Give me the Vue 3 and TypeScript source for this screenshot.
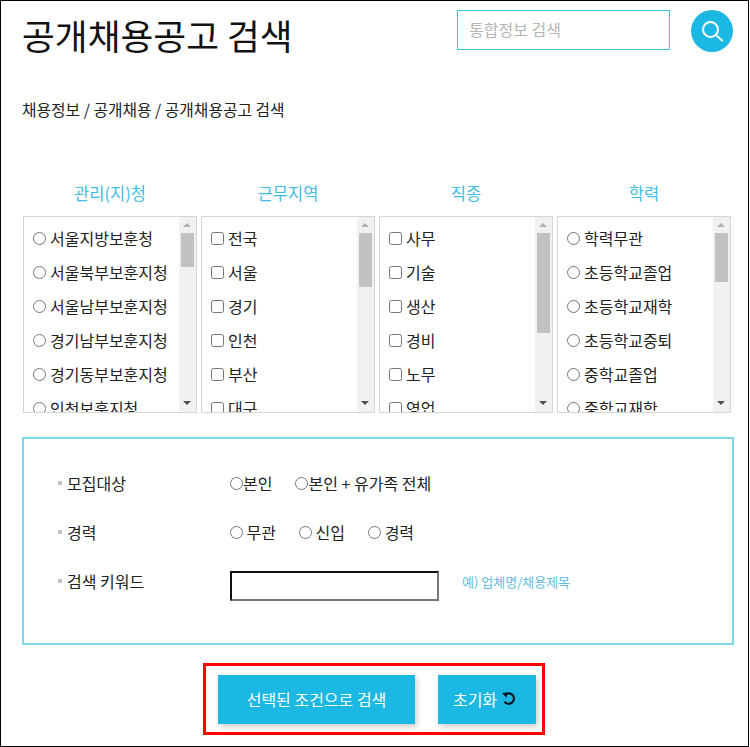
<script setup lang="ts">
interface Filter {
  title: string;
  type: "radio" | "checkbox";
  thumb: number;
  items: string[];
}

const filters: Filter[] = [
  {
    title: "관리(지)청",
    type: "radio",
    thumb: 34,
    items: ["서울지방보훈청", "서울북부보훈지청", "서울남부보훈지청", "경기남부보훈지청", "경기동부보훈지청", "인천보훈지청"],
  },
  {
    title: "근무지역",
    type: "checkbox",
    thumb: 54,
    items: ["전국", "서울", "경기", "인천", "부산", "대구"],
  },
  {
    title: "직종",
    type: "checkbox",
    thumb: 100,
    items: ["사무", "기술", "생산", "경비", "노무", "영업"],
  },
  {
    title: "학력",
    type: "radio",
    thumb: 49,
    items: ["학력무관", "초등학교졸업", "초등학교재학", "초등학교중퇴", "중학교졸업", "중학교재학"],
  },
];
</script>

<template>
  <div class="page">
    <header class="top">
      <h1>공개채용공고 검색</h1>
      <div class="search">
        <input class="search-input" type="text" placeholder="통합정보 검색" />
        <button class="search-btn" type="button" aria-label="검색">
          <svg width="24" height="24" viewBox="0 0 24 24" fill="none" stroke="#fff" stroke-width="2">
            <circle cx="10.5" cy="10.5" r="7.5" />
            <path d="M16 16l6 5.5" stroke-linecap="round" />
          </svg>
        </button>
      </div>
    </header>

    <p class="crumb">채용정보 / 공개채용 / 공개채용공고 검색</p>

    <section class="filters">
      <div v-for="f in filters" :key="f.title" class="filter">
        <h2>{{ f.title }}</h2>
        <div class="box">
          <ul>
            <li v-for="item in f.items" :key="item">
              <input :type="f.type" :name="f.title" />
              <span>{{ item }}</span>
            </li>
          </ul>
          <div class="bar">
            <i class="arrow up"></i>
            <i class="thumb" :style="{ height: f.thumb + 'px' }"></i>
            <i class="arrow down"></i>
          </div>
        </div>
      </div>
    </section>

    <section class="panel">
      <div class="row">
        <span class="label">모집대상</span>
        <div class="opts">
          <label><input type="radio" name="target" />본인</label>
          <label><input type="radio" name="target" />본인 + 유가족 전체</label>
        </div>
      </div>
      <div class="row">
        <span class="label">경력</span>
        <div class="opts">
          <label><input type="radio" name="career" /> 무관</label>
          <label><input type="radio" name="career" /> 신입</label>
          <label><input type="radio" name="career" /> 경력</label>
        </div>
      </div>
      <div class="row">
        <span class="label">검색 키워드</span>
        <input class="keyword" type="text" />
        <span class="hint">예) 업체명/채용제목</span>
      </div>
    </section>

    <div class="actions">
      <button class="btn wide" type="button">선택된 조건으로 검색</button>
      <button class="btn reset" type="button">
        초기화
        <svg width="14" height="14" viewBox="0 0 14 14" fill="none" stroke="#0a1626" stroke-width="2.2">
          <path d="M3 3A5.2 5.2 0 1 1 2.5 9.6" />
          <path d="M0 1L5.5 0.6L4.6 5.8z" fill="#0a1626" stroke="none" />
        </svg>
      </button>
    </div>
  </div>
</template>

<style>
html,
body {
  margin: 0;
  background: #fff;
}
</style>

<style scoped>
.page {
  box-sizing: border-box;
  width: 749px;
  height: 747px;
  border: 1px solid #000;
  overflow: hidden;
  font-family: "Noto Sans CJK KR", "Noto Sans", sans-serif;
  color: #222;
}
.top {
  display: flex;
  justify-content: space-between;
  padding: 9px 15px 0 21px;
}
h1 {
  margin: 0;
  font-size: 35.7px;
  font-weight: 400;
  line-height: 50px;
  color: #111;
}
.search {
  display: flex;
  gap: 21px;
}
.search-input {
  box-sizing: border-box;
  width: 213px;
  height: 40px;
  padding: 0 11px 2px;
  border: 1px solid #3fc3ea;
  outline: 0;
  font: 16px "Noto Sans CJK KR", sans-serif;
}
.search-input::placeholder {
  color: #b5b5b5;
}
.search-btn {
  display: flex;
  align-items: center;
  justify-content: center;
  width: 42px;
  height: 42px;
  padding: 0;
  border: 0;
  border-radius: 50%;
  background: #1ab8e2;
}
.crumb {
  margin: 40px 0 0 21px;
  font-size: 15.8px;
  line-height: 20px;
  color: #222;
}
.filters {
  display: grid;
  grid-template-columns: repeat(4, 174px);
  gap: 4px;
  margin: 62px 0 0 22px;
}
h2 {
  margin: 0 0 12px;
  font-size: 16.5px;
  font-weight: 400;
  line-height: 22px;
  text-align: center;
  color: #3fbde2;
}
.box {
  box-sizing: border-box;
  display: flex;
  height: 197px;
  border: 1px solid #d6d6d6;
  overflow: hidden;
}
ul {
  flex: 1;
  margin: 0;
  padding: 4px 0 0 9px;
  list-style: none;
}
li {
  display: flex;
  align-items: center;
  gap: 4px;
  height: 34px;
  font-size: 16px;
  white-space: nowrap;
}
li input,
.opts input {
  margin: 0;
}
.bar {
  position: relative;
  flex: none;
  width: 17px;
  height: 100%;
  background: #f1f1f1;
}
.thumb {
  position: absolute;
  top: 16px;
  left: 2px;
  width: 13px;
  background: #c1c1c1;
}
.arrow {
  position: absolute;
  left: 4px;
  width: 0;
  height: 0;
  border-left: 4px solid transparent;
  border-right: 4px solid transparent;
}
.arrow.up {
  top: 6px;
  border-bottom: 4px solid #b0b0b0;
}
.arrow.down {
  bottom: 7px;
  border-top: 4px solid #505050;
}
.panel {
  box-sizing: border-box;
  display: flex;
  flex-direction: column;
  gap: 27px;
  width: 712px;
  height: 208px;
  margin: 24px 0 0 21px;
  padding: 33px 0 0 34px;
  border: 2px solid #7cd9ea;
  font-size: 16px;
}
.row {
  display: flex;
  align-items: center;
  height: 22px;
}
.label {
  display: flex;
  align-items: center;
  gap: 5px;
  width: 172px;
}
.label::before {
  content: "";
  width: 4px;
  height: 4px;
  background: #c4c4c4;
}
.opts {
  display: flex;
  gap: 23px;
}
.opts label {
  display: flex;
  align-items: center;
  white-space: pre;
}
.keyword {
  box-sizing: border-box;
  flex: none;
  width: 209px;
  height: 30px;
  margin-top: 9px;
  border: 2px solid;
  border-color: #111 #767676 #767676 #111;
  outline: 0;
}
.hint {
  margin-left: 23px;
  font-size: 13px;
  color: #63bddd;
}
.actions {
  box-sizing: border-box;
  display: flex;
  gap: 23px;
  width: 342px;
  height: 72px;
  margin: 18px 0 0 202px;
  padding: 9px 0 0 12px;
  border: 3px solid #f00;
}
.btn {
  height: 49px;
  padding: 0 0 2px;
  border: 0;
  background: #1ab8e2;
  box-shadow: 2px 3px 6px rgba(0, 0, 0, 0.2);
  color: #fff;
  font: 16px "Noto Sans CJK KR", sans-serif;
}
.wide {
  width: 197px;
}
.reset {
  display: flex;
  align-items: center;
  justify-content: center;
  gap: 5px;
  width: 98px;
  padding-right: 5px;
}
</style>
